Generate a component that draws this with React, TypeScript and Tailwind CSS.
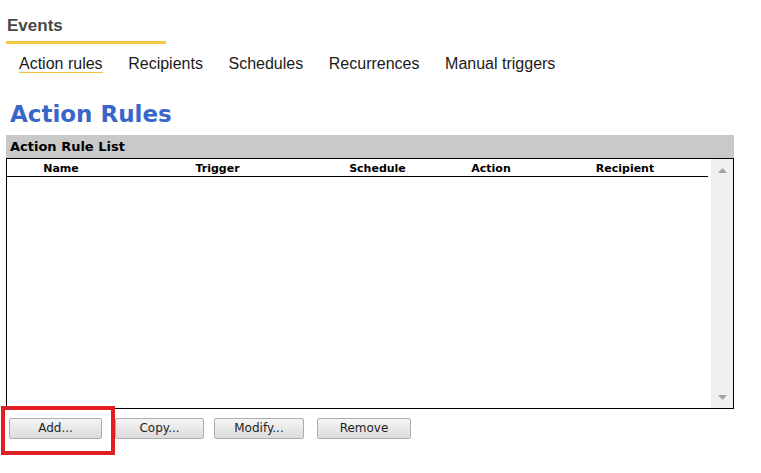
import React from "react";

const sans = { fontFamily: '"Liberation Sans", Arial, sans-serif' };
const dv = { fontFamily: '"DejaVu Sans", Verdana, sans-serif' };

function Btn({ label, w, ml }: { label: string; w: string; ml: string }) {
  return (
    <button
      className={`${w} ${ml} h-[21px] border border-[#adadad] rounded-[2px] bg-gradient-to-b from-[#f5f5f5] to-[#dcdcdc] text-[12px] leading-[19px] text-[#1e1e1e] text-center`}
      style={dv}
    >
      {label}
    </button>
  );
}

export default function App() {
  const tabs = ["Action rules", "Recipients", "Schedules", "Recurrences", "Manual triggers"];
  return (
    <div className="w-[761px] h-[473px] bg-white overflow-hidden pl-[6px]">
      <div className="pt-[16px] pl-[1px] text-[17px] leading-[20px] font-bold text-[#474747]" style={sans}>
        Events
      </div>
      <div className="mt-[5px] w-[160px] h-[3px] bg-[#f4c83e]" />
      <div className="mt-[11px] pl-[13px] flex gap-[25.6px] text-[16px] leading-[17px] text-[#1a1a1a]" style={sans}>
        {tabs.map((t, i) => (
          <span key={t} className={i === 0 ? "border-b border-[#f0c040]" : "border-b border-transparent"}>
            {t}
          </span>
        ))}
      </div>
      <div className="mt-[28px] pl-[4px] text-[23px] leading-[27px] font-bold text-[#3a67c7]" style={dv}>
        Action Rules
      </div>
      <div className="mt-[7px] w-[728px] h-[23px] bg-[#c9c9c9] flex items-center pl-[4px]">
        <span className="text-[13px] leading-[15px] font-bold text-black" style={dv}>
          Action Rule List
        </span>
      </div>
      <div className="w-[728px] h-[251px] border border-black flex">
        <div className="flex-1 mr-[3px]">
          <div
            className="h-[18px] border-b border-black grid grid-cols-[108px_205px_115px_112px_156px] pt-[3px] text-[11px] leading-[13px] font-bold text-black"
            style={dv}
          >
            <span className="text-center">Name</span>
            <span className="text-center">Trigger</span>
            <span className="text-center">Schedule</span>
            <span className="text-center">Action</span>
            <span className="text-center">Recipient</span>
          </div>
        </div>
        <div className="w-[22px] bg-[#f0f0f0] flex flex-col justify-between items-center pt-[9px] pb-[8px]">
          <svg width="9" height="5" viewBox="0 0 9 5">
            <polygon points="0,5 9,5 4.5,0" fill="#a3a3a3" />
          </svg>
          <svg width="9" height="5" viewBox="0 0 9 5">
            <polygon points="0,0 9,0 4.5,5" fill="#a3a3a3" />
          </svg>
        </div>
      </div>
      <div className="relative mt-[9px] flex">
        <Btn label="Add..." w="w-[93px]" ml="ml-[3px]" />
        <Btn label="Copy..." w="w-[89px]" ml="ml-[13px]" />
        <Btn label="Modify..." w="w-[90px]" ml="ml-[10px]" />
        <Btn label="Remove" w="w-[94px]" ml="ml-[13px]" />
        <div className="absolute left-[-5px] top-[-12px] w-[114px] h-[49px] border-4 border-[#e01e26]" />
      </div>
    </div>
  );
}
